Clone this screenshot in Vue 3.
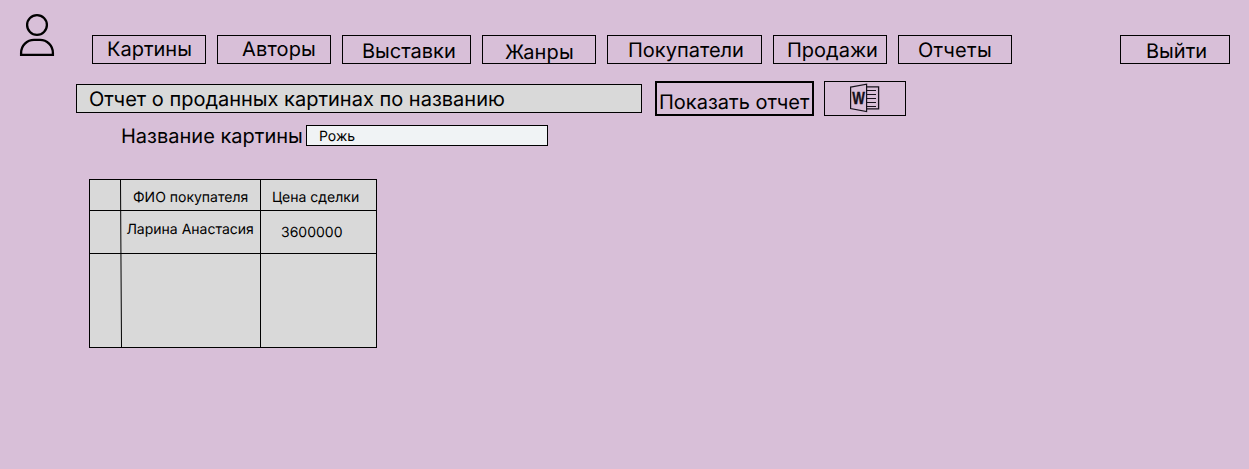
<script setup>
const nav = [
  { label: 'Картины', cls: 'paintings' },
  { label: 'Авторы', cls: 'authors' },
  { label: 'Выставки', cls: 'exhibitions' },
  { label: 'Жанры', cls: 'genres' },
  { label: 'Покупатели', cls: 'buyers' },
  { label: 'Продажи', cls: 'sales' },
  { label: 'Отчеты', cls: 'reports' },
]
</script>

<template>
  <main class="page">
    <header class="header">
      <svg class="user" width="36" height="44" viewBox="0 0 36 44" fill="none" stroke="#000" stroke-width="2.3">
        <circle cx="18" cy="12" r="9.9" />
        <path d="M2.1 41.8V40C2.1 32.5 8 26.9 15 26.9H21C28 26.9 33.9 32.5 33.9 40V41.8Z" />
      </svg>
      <nav class="nav">
        <button v-for="item in nav" :key="item.cls" class="btn" :class="item.cls">{{ item.label }}</button>
      </nav>
      <button class="btn exit">Выйти</button>
    </header>

    <section class="toolbar">
      <div class="report">Отчет о проданных картинах по названию</div>
      <button class="show">Показать отчет</button>
      <button class="word" aria-label="Word">
        <svg width="32" height="31" viewBox="0 0 32 31" fill="none" stroke="#15101a">
          <path d="M1.6 4.1L17.6 1.1V28.6L1.6 25.6Z" stroke-width="1.2" />
          <path d="M17.6 3.9H29.6V25.9H17.6" stroke-width="1.3" />
          <path d="M18 7.5H27M18 11.5H27M18 15.5H27M18 19.5H27M18 23.5H27" stroke-width="1.1" />
          <text class="letter" x="3.2" y="21" textLength="12.6" lengthAdjust="spacingAndGlyphs">W</text>
        </svg>
      </button>
    </section>

    <section class="filter">
      <label class="caption">Название картины</label>
      <div class="input">Рожь</div>
    </section>

    <section class="table">
      <div class="cell"></div>
      <div class="cell buyer-head">ФИО покупателя</div>
      <div class="cell price-head">Цена сделки</div>
      <div class="cell"></div>
      <div class="cell buyer">Ларина Анастасия</div>
      <div class="cell price">3600000</div>
      <div class="cell last"></div>
      <div class="cell last"></div>
      <div class="cell last"></div>
      <svg class="divider" width="4" height="167" viewBox="0 0 4 167">
        <path d="M1.5 0L2.5 167" stroke="#000" />
      </svg>
    </section>
  </main>
</template>

<style>
body {
  background: #d8bfd8;
}
</style>

<style scoped>
.page {
  height: 469px;
  background: #d8bfd8;
  color: #000;
  font: 400 20px/24px Inter, "Noto Sans", sans-serif;
  text-rendering: geometricPrecision;
  overflow: hidden;
  white-space: nowrap;
}
.page *,
.page {
  box-sizing: border-box;
}
button {
  appearance: none;
  margin: 0;
  background: none;
  color: inherit;
  font: inherit;
  text-align: left;
  text-rendering: inherit;
  white-space: nowrap;
}
.header {
  display: flex;
  align-items: flex-start;
  height: 81px;
  padding: 13px 19px 0;
}
.user {
  flex: none;
}
.nav {
  display: flex;
  gap: 11px;
  margin: 22px auto 0 37px;
}
.btn {
  display: block;
  width: 114px;
  height: 29px;
  padding: 1px 0 2px;
  border: 1px solid #000;
}
.paintings { padding-left: 14px; }
.authors { padding-left: 24px; letter-spacing: 0.15px; }
.exhibitions { width: 129px; padding: 3px 0 0 19px; }
.genres { padding: 4px 0 0 22px; line-height: 25px; letter-spacing: 0.15px; }
.buyers { width: 155px; padding: 2px 0 1px 20px; }
.sales { padding: 2px 0 1px 13px; }
.reports { padding: 2px 0 1px 19px; letter-spacing: 0.3px; }
.exit {
  width: 110px;
  margin-top: 22px;
  padding: 3px 0 0 25px;
}
.toolbar {
  display: flex;
  align-items: flex-start;
  height: 44px;
  padding-left: 76px;
}
.report {
  width: 566px;
  height: 29px;
  margin: 3px 13px 0 0;
  padding: 2px 0 0 12px;
  border: 1px solid #000;
  background: #d9d9d9;
}
.show {
  width: 159px;
  height: 35px;
  margin-right: 10px;
  padding: 7px 0 0 2px;
  border: 2px solid #000;
}
.word {
  display: flex;
  width: 82px;
  height: 35px;
  padding: 1px 0 0 24px;
  border: 1px solid #000;
}
.letter {
  fill: #15101a;
  stroke: #15101a;
  stroke-width: 0.4px;
  font: 700 17.5px "Liberation Sans", sans-serif;
}
.filter {
  display: flex;
  align-items: flex-start;
  padding-left: 121px;
}
.caption {
  width: 185px;
  margin-top: -1px;
}
.input {
  width: 242px;
  height: 21px;
  padding: 2px 0 0 12px;
  border: 1px solid #000;
  background: #f0f3f5;
  font-size: 14px;
  line-height: 17px;
}
.table {
  position: relative;
  display: grid;
  grid-template-columns: 31px 140px 115px;
  grid-template-rows: 31px 43px 93px;
  width: 288px;
  height: 169px;
  margin: 31px 0 0 89px;
  border: 1px solid #000;
  background: #d9d9d9;
  font-size: 14px;
  line-height: 17px;
}
.cell {
  border-bottom: 1px solid #000;
}
.cell:nth-child(3n + 2) {
  border-right: 1px solid #000;
}
.last {
  border-bottom: 0;
}
.buyer-head { padding: 9px 0 0 12px; }
.price-head { padding: 9px 0 0 11px; }
.buyer { padding: 10px 0 0 5.4px; }
.price { padding: 13px 0 0 20px; }
.divider {
  position: absolute;
  top: 0;
  left: 29px;
}
</style>
